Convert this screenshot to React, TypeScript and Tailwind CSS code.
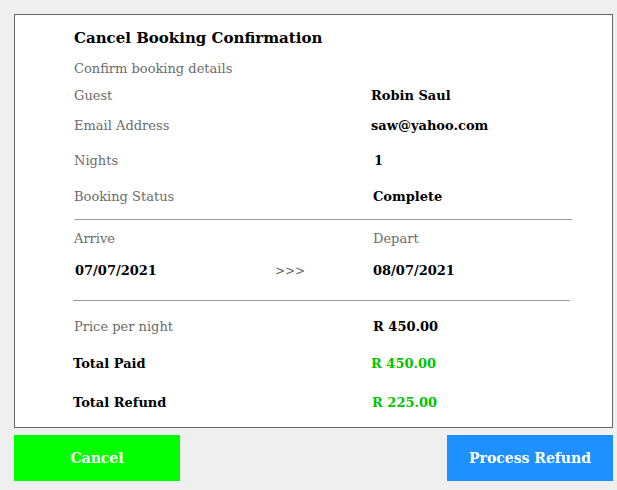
import React from "react";

const font = { fontFamily: '"DejaVu Serif", serif' };

function Row({ label, value, mt, labelClass, valueClass, valueOffset = "" }: { label: string; value: string; mt: string; labelClass: string; valueClass: string; valueOffset?: string }) {
  return (
    <div className={`flex h-[24px] items-center ${mt}`}>
      <div className={`w-[298px] ${labelClass}`}>{label}</div>
      <div className={`${valueClass} ${valueOffset}`}>{value}</div>
    </div>
  );
}

export default function App() {
  const lab = "text-[13px] text-[#6b6b6b]";
  const val = "text-[13px] font-bold text-black";
  const green = "text-[13px] font-bold text-[#00c400]";
  return (
    <div className="w-[617px] h-[490px] bg-[#efefef] pt-[14px] pl-[14px]" style={font}>
      <div className="w-[599px] h-[414px] bg-white border border-[#666] pl-[59px] pt-[11px]">
        <div className="h-[24px] flex items-center text-[15px] font-bold text-black">Cancel Booking Confirmation</div>
        <div className={`h-[24px] flex items-center mt-[7px] ${lab}`}>Confirm booking details</div>
        <Row label="Guest" value="Robin Saul" mt="mt-[3px]" labelClass={lab} valueClass={val} valueOffset="-ml-[1px]" />
        <Row label="Email Address" value="saw@yahoo.com" mt="mt-[6px]" labelClass={lab} valueClass={val} valueOffset="-ml-[1px]" />
        <Row label="Nights" value="1" mt="mt-[11px]" labelClass={lab} valueClass={val} valueOffset="ml-[2px]" />
        <Row label="Booking Status" value="Complete" mt="mt-[12px]" labelClass={lab} valueClass={val} valueOffset="ml-[1px]" />
        <div className="mt-[10px] ml-[1px] w-[497px] h-px bg-[#999]" />
        <Row label="Arrive" value="Depart" mt="mt-[7px]" labelClass={lab} valueClass={lab} valueOffset="ml-[1px]" />
        <div className="flex h-[24px] items-center mt-[8px]">
          <div className={`w-[200px] ${val} ml-[1px]`}>07/07/2021</div>
          <div className="w-[97px] text-[12px] text-[#6b6b6b]">&gt;&gt;&gt;</div>
          <div className={`${val} ml-[1px]`}>08/07/2021</div>
        </div>
        <div className="mt-[17px] -ml-[1px] w-[497px] h-px bg-[#999]" />
        <Row label="Price per night" value="R 450.00" mt="mt-[14px]" labelClass={lab} valueClass={val} valueOffset="ml-[1px]" />
        <Row label="Total Paid" value="R 450.00" mt="mt-[13px]" labelClass={`${val} -ml-[1px]`} valueClass={green} />
        <Row label="Total Refund" value="R 225.00" mt="mt-[15px]" labelClass={`${val} -ml-[1px]`} valueClass={green} valueOffset="ml-[1px]" />
      </div>
      <div className="w-[599px] flex justify-between mt-[7px]">
        <button className="w-[166px] h-[46px] bg-[#00ff00] text-white text-[14px] font-bold flex items-center justify-center">Cancel</button>
        <button className="w-[166px] h-[46px] bg-[#1e90ff] text-white text-[14px] font-bold flex items-center justify-center">Process Refund</button>
      </div>
    </div>
  );
}
